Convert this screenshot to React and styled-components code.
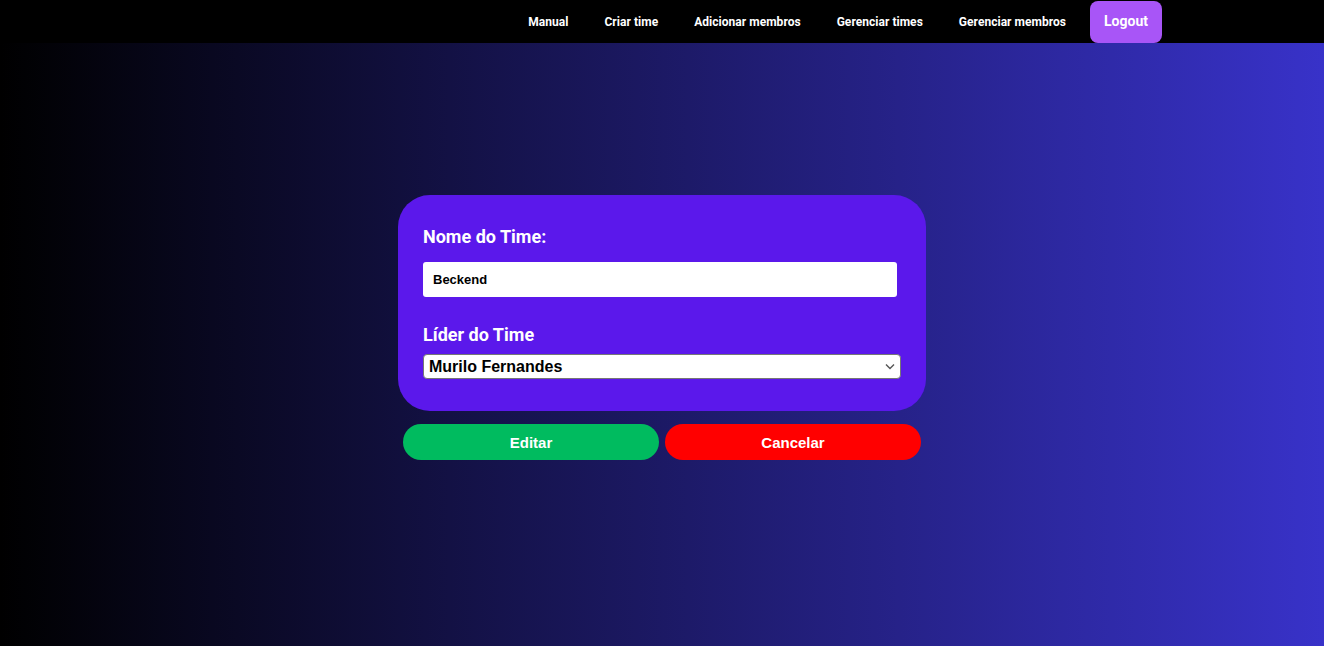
import React from "react";
import styled, { createGlobalStyle } from "styled-components";

const Global = createGlobalStyle`
  html, body { margin: 0; padding: 0; }
  body {
    min-height: 646px;
    background: linear-gradient(to right, #000000 0%, #3832c9 100%);
    font-family: Roboto, "Liberation Sans", Arial, sans-serif;
  }
  #root { min-height: 646px; }
`;

const Header = styled.header`
  height: 43px;
  background: #000;
  display: flex;
  justify-content: flex-end;
  align-items: stretch;
  padding-right: 162px;
`;

const Nav = styled.nav`
  display: flex;
  align-items: center;
`;

const NavLink = styled.a`
  color: #fff;
  font-family: Roboto, sans-serif;
  font-weight: 700;
  font-size: 12px;
  letter-spacing: 0.035px;
  padding: 0 18px;
  text-decoration: none;
  white-space: nowrap;
`;

const LogoutButton = styled.button`
  margin-left: 6px;
  align-self: flex-end;
  height: 42px;
  width: 72px;
  padding: 0 0 2px;
  border: none;
  border-radius: 8px;
  background: #a855f7;
  color: #fff;
  font-family: Roboto, sans-serif;
  font-weight: 700;
  font-size: 14px;
  cursor: pointer;
`;

const Main = styled.main`
  display: flex;
  flex-direction: column;
  align-items: center;
  padding-top: 152px;
`;

const Card = styled.form`
  width: 528px;
  box-sizing: border-box;
  background: #5b18eb;
  border-radius: 32px;
  padding: 30px 25px 32px;
  display: flex;
  flex-direction: column;
`;

const Label = styled.label`
  color: #fff;
  font-family: Roboto, sans-serif;
  font-weight: 700;
  font-size: 18px;
  line-height: 24px;
  margin-bottom: ${(p) => p.$mb}px;
  margin-top: ${(p) => p.$mt || 0}px;
`;

const TextInput = styled.input`
  width: 474px;
  height: 35px;
  box-sizing: border-box;
  border: none;
  border-radius: 3px;
  padding: 0 10px;
  font-family: "Liberation Sans", Arial, sans-serif;
  font-weight: 700;
  font-size: 13px;
  color: #000;
  outline: none;
`;

const SelectWrap = styled.div`
  position: relative;
  width: 478px;
`;

const Select = styled.select`
  width: 478px;
  height: 25px;
  box-sizing: border-box;
  appearance: none;
  background: #fff;
  border: 1px solid #767676;
  border-radius: 4px;
  padding: 0 20px 0 5px;
  font-family: "Liberation Sans", Arial, sans-serif;
  font-weight: 700;
  font-size: 16px;
  color: #000;
  outline: none;
`;

const Chevron = styled.svg`
  position: absolute;
  right: 6px;
  top: 9px;
  pointer-events: none;
`;

const Buttons = styled.div`
  display: flex;
  gap: 6px;
  margin-top: 13px;
`;

const ActionButton = styled.button`
  width: 256px;
  height: 36px;
  border: none;
  border-radius: 18px;
  background: ${(p) => p.$bg};
  color: #fff;
  font-family: "Liberation Sans", Arial, sans-serif;
  font-weight: 700;
  font-size: 15px;
  cursor: pointer;
`;

export default function App() {
  return (
    <>
      <Global />
      <Header>
        <Nav>
          <NavLink>Manual</NavLink>
          <NavLink>Criar time</NavLink>
          <NavLink>Adicionar membros</NavLink>
          <NavLink>Gerenciar times</NavLink>
          <NavLink>Gerenciar membros</NavLink>
          <LogoutButton>Logout</LogoutButton>
        </Nav>
      </Header>
      <Main>
        <Card onSubmit={(e) => e.preventDefault()}>
          <Label $mb={13}>Nome do Time:</Label>
          <TextInput defaultValue="Beckend" />
          <Label $mt={26} $mb={7}>Líder do Time</Label>
          <SelectWrap>
            <Select defaultValue="murilo">
              <option value="murilo">Murilo Fernandes</option>
            </Select>
            <Chevron width="10" height="7" viewBox="0 0 10 7">
              <path d="M1 1.5 L5 5.5 L9 1.5" fill="none" stroke="#555" strokeWidth="1.4" />
            </Chevron>
          </SelectWrap>
        </Card>
        <Buttons>
          <ActionButton $bg="#00bb5f">Editar</ActionButton>
          <ActionButton $bg="#ff0000">Cancelar</ActionButton>
        </Buttons>
      </Main>
    </>
  );
}
